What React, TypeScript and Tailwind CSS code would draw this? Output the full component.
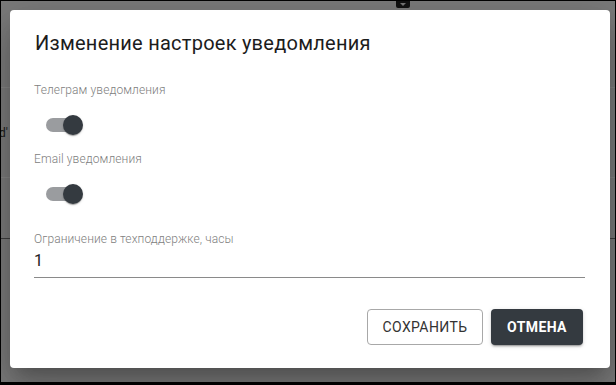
import React from 'react';

const font = { fontFamily: 'Roboto, "Noto Sans", sans-serif' };

const Toggle: React.FC<{ checked?: boolean }> = ({ checked = true }) => (
  <div className="relative w-[58px] h-[38px] shrink-0">
    <div
      className={
        checked
          ? 'absolute left-[12px] top-[12px] w-[34px] h-[14px] rounded-full bg-[#9a9c9f]'
          : 'absolute left-[12px] top-[12px] w-[34px] h-[14px] rounded-full bg-[#bdbdbd]'
      }
    />
    <div
      className={
        checked
          ? 'absolute left-[29px] top-[9px] w-[20px] h-[20px] rounded-full bg-[#343a40] shadow-[0_2px_1px_-1px_rgba(0,0,0,0.2),0_1px_1px_0_rgba(0,0,0,0.14),0_1px_3px_0_rgba(0,0,0,0.12)]'
          : 'absolute left-[9px] top-[9px] w-[20px] h-[20px] rounded-full bg-white shadow'
      }
    />
  </div>
);

const FieldLabel: React.FC<{ children: React.ReactNode }> = ({ children }) => (
  <div className="text-[12px] leading-[16px] font-light text-[#808080] tracking-[0.1px]">{children}</div>
);

export default function App() {
  return (
    <div
      className="relative w-[616px] h-[385px] overflow-hidden bg-[#7b7b7b] border border-black border-b-[3px]"
      style={font}
    >
      {/* page behind the overlay */}
      <div className="flex flex-col">
        <div className="h-[87px] border-b border-[#858585]" />
        <div className="h-[90px] border-b border-[#858585] flex items-center">
          <span className="text-[12px] text-[#1a1a1a] -ml-[2px]">d'</span>
        </div>
        <div className="h-[61px] border-b border-[#3f3f3f]" />
      </div>
      <div className="absolute left-[395px] -top-[5px] w-[14px] h-[12px] rounded-[2px] bg-[#111] flex items-end justify-center">
        <div className="w-0 h-0 border-l-[3px] border-r-[3px] border-t-[3px] border-l-transparent border-r-transparent border-t-[#777] mb-[2px]" />
      </div>

      {/* dialog */}
      <div className="absolute left-[9px] top-[9px] w-[600px] h-[358px] bg-white rounded-[4px] shadow-[0_11px_15px_-7px_rgba(0,0,0,0.2),0_24px_38px_3px_rgba(0,0,0,0.14),0_9px_46px_8px_rgba(0,0,0,0.12)] flex flex-col px-[24px] pt-[17px]">
        <h2 className="text-[20px] leading-[32px] font-normal text-[#1c1c1c] tracking-[0.25px] pl-[1px]">
          Изменение настроек уведомления
        </h2>

        <div className="mt-[23px]">
          <FieldLabel>Телеграм уведомления</FieldLabel>
        </div>
        <div className="mt-[8px]">
          <Toggle />
        </div>

        <div className="mt-[7px]">
          <FieldLabel>Email уведомления</FieldLabel>
        </div>
        <div className="mt-[8px]">
          <Toggle />
        </div>

        <div className="mt-[18px]">
          <FieldLabel>Ограничение в техподдержке, часы</FieldLabel>
        </div>
        <div className="mr-[1px] pt-[2px] pb-[5px] border-b border-[#8a8a8a]">
          <div className="text-[16px] leading-[23px] text-[#212121]">1</div>
        </div>

        <div className="mt-[31px] flex justify-end gap-[8px] pr-[3px]">
          <button className="h-[36px] w-[116px] rounded-[4px] border border-[#a8a8a8] bg-white text-[14px] font-normal text-[#333] tracking-[0.4px]">
            СОХРАНИТЬ
          </button>
          <button className="h-[36px] w-[92px] rounded-[4px] bg-[#343a40] text-[14px] font-bold text-white tracking-[0.4px] shadow-[0_3px_1px_-2px_rgba(0,0,0,0.2),0_2px_2px_0_rgba(0,0,0,0.14),0_1px_5px_0_rgba(0,0,0,0.12)]">
            ОТМЕНА
          </button>
        </div>
      </div>
    </div>
  );
}
